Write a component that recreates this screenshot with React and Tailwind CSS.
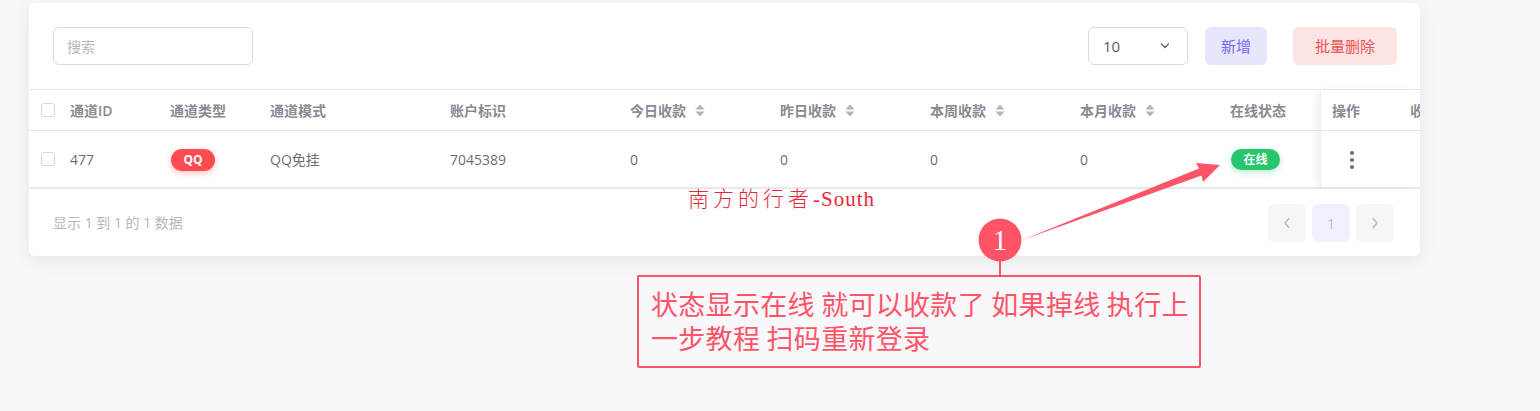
import React from "react";

const SortIcon = () => (
  <svg width="10" height="13" viewBox="0 0 10 13" className="ml-[9px] shrink-0">
    <path d="M5 0.5 L9.5 5.5 L0.5 5.5 Z" fill="#b4b3bb" />
    <path d="M5 12.5 L9.5 7.5 L0.5 7.5 Z" fill="#b4b3bb" />
  </svg>
);

const Checkbox = () => (
  <div className="w-[14px] h-[14px] rounded-[3px] border border-[#d8d6de] bg-white" />
);

const cols = [
  { w: "w-[100px]", label: "通道ID" },
  { w: "w-[100px]", label: "通道类型" },
  { w: "w-[180px]", label: "通道模式" },
  { w: "w-[180px]", label: "账户标识" },
  { w: "w-[150px]", label: "今日收款", sort: true },
  { w: "w-[150px]", label: "昨日收款", sort: true },
  { w: "w-[150px]", label: "本周收款", sort: true },
  { w: "w-[150px]", label: "本月收款", sort: true },
  { w: "w-[102px]", label: "在线状态" },
];

export default function App() {
  const font = { fontFamily: '"Open Sans", "Noto Sans CJK SC", sans-serif' };
  return (
    <div className="relative w-[1540px] h-[411px] bg-[#f8f7fa] pt-[3px] pl-[29px] overflow-hidden" style={font}>
      {/* Card */}
      <div className="w-[1391px] bg-white rounded-md shadow-[0_4px_18px_rgba(75,70,92,0.10)] overflow-hidden">
        {/* Toolbar */}
        <div className="flex items-center py-6 pl-6 pr-[23px]">
          <div className="w-[200px] h-[38px] rounded-md border border-[#dbdade] flex items-center pl-[13px] text-[14px] text-[#b7b5be]">
            搜索
          </div>
          <div className="flex-1" />
          <div className="w-[100px] h-[38px] rounded-md border border-[#dbdade] flex items-center justify-between pl-[14px] pr-[17px] text-[15px] text-[#5d596c]">
            <span>10</span>
            <svg width="10" height="6" viewBox="0 0 10 6">
              <path d="M1.5 1 L5 4.5 L8.5 1" stroke="#5d596c" strokeWidth="1.3" fill="none" strokeLinecap="round" strokeLinejoin="round" />
            </svg>
          </div>
          <div className="ml-[17px] w-[62px] h-[38px] rounded-md bg-[#e7e6fc] flex items-center justify-center text-[15px] text-[#7367f0]">
            新增
          </div>
          <div className="ml-[26px] w-[104px] h-[38px] rounded-md bg-[#fde3e4] flex items-center justify-center text-[15px] text-[#ea5455]">
            批量删除
          </div>
        </div>

        {/* Table */}
        <div className="flex border-t border-[#e6e5e8] border-b-2 border-b-[#e9e8ed]">
          <div className="flex-1 overflow-hidden">
            {/* Header row */}
            <div className="flex h-[41px] border-b border-[#e6e5e8] items-center">
              <div className="w-[29px] pl-[12px] shrink-0">
                <Checkbox />
              </div>
              {cols.map((c) => (
                <div key={c.label} className={`${c.w} shrink-0 pl-[12px] flex items-center text-[14px] font-semibold text-[#8a8993]`}>
                  <span>{c.label}</span>
                  {c.sort && <SortIcon />}
                </div>
              ))}
            </div>
            {/* Body row */}
            <div className="flex h-[56px] items-center text-[14px] text-[#6f6b7d]">
              <div className="w-[29px] pl-[12px] shrink-0">
                <Checkbox />
              </div>
              <div className="w-[100px] shrink-0 pl-[12px]">477</div>
              <div className="w-[100px] shrink-0 pl-[13px]">
                <span className="inline-flex items-center justify-center w-[44px] h-[22px] rounded-full bg-[#ff4c51] text-white text-[12px] font-bold shadow-[0_2px_6px_rgba(255,76,81,0.35)]">
                  QQ
                </span>
              </div>
              <div className="w-[180px] shrink-0 pl-[12px]">QQ免挂</div>
              <div className="w-[180px] shrink-0 pl-[12px]">7045389</div>
              <div className="w-[150px] shrink-0 pl-[12px]">0</div>
              <div className="w-[150px] shrink-0 pl-[12px]">0</div>
              <div className="w-[150px] shrink-0 pl-[12px]">0</div>
              <div className="w-[150px] shrink-0 pl-[12px]">0</div>
              <div className="w-[102px] shrink-0 pl-[13px]">
                <span className="inline-flex items-center justify-center w-[49px] h-[21px] rounded-full bg-[#28c76f] text-white text-[12px] font-bold shadow-[0_2px_6px_rgba(40,199,111,0.35)]">
                  在线
                </span>
              </div>
            </div>
          </div>
          {/* Fixed right columns */}
          <div className="w-[100px] shrink-0 bg-white shadow-[-5px_0_8px_-3px_rgba(75,70,92,0.10)] border-l border-[#efeef2] z-10 overflow-hidden">
            <div className="flex h-[41px] border-b border-[#e6e5e8] items-center text-[14px] font-semibold text-[#8a8993] whitespace-nowrap">
              <div className="w-[78px] shrink-0 pl-[11px]">操作</div>
              <div className="pl-[11px]">收</div>
            </div>
            <div className="flex h-[56px] items-center">
              <div className="w-[78px] shrink-0 pl-[29px] flex flex-col gap-[3px] pt-[1px]">
                <span className="w-[4px] h-[4px] rounded-full bg-[#6f6b7d]" />
                <span className="w-[4px] h-[4px] rounded-full bg-[#6f6b7d]" />
                <span className="w-[4px] h-[4px] rounded-full bg-[#6f6b7d]" />
              </div>
            </div>
          </div>
        </div>

        {/* Footer */}
        <div className="h-[67px] flex items-center justify-between pl-6 pr-[26px]">
          <span className="text-[14px] text-[#b7b5be]">显示 1 到 1 的 1 数据</span>
          <div className="flex gap-[6px] pt-[1px]">
            <div className="w-[38px] h-[38px] rounded-md bg-[#f6f6f7] flex items-center justify-center">
              <svg width="8" height="12" viewBox="0 0 8 12">
                <path d="M6 1.5 L2 6 L6 10.5" stroke="#b7b5be" strokeWidth="1.4" fill="none" strokeLinecap="round" strokeLinejoin="round" />
              </svg>
            </div>
            <div className="w-[38px] h-[38px] rounded-md bg-[#f1f0fe] flex items-center justify-center text-[14px] text-[#b9b3f7]">
              1
            </div>
            <div className="w-[38px] h-[38px] rounded-md bg-[#f6f6f7] flex items-center justify-center">
              <svg width="8" height="12" viewBox="0 0 8 12">
                <path d="M2 1.5 L6 6 L2 10.5" stroke="#b7b5be" strokeWidth="1.4" fill="none" strokeLinecap="round" strokeLinejoin="round" />
              </svg>
            </div>
          </div>
        </div>
      </div>

      {/* Watermark text */}
      <div className="absolute left-[688px] top-[185px] leading-[25px] text-[#e8283a] whitespace-nowrap flex items-baseline">
        <span
          className="text-[21px] tracking-[4px]"
          style={{ fontFamily: '"Noto Sans CJK SC", serif', fontWeight: 300 }}
        >
          南方的行者
        </span>
        <span className="text-[21px] tracking-[1px]" style={{ fontFamily: '"Liberation Serif", serif' }}>
          -South
        </span>
      </div>

      {/* Arrow + marker */}
      <svg className="absolute left-0 top-0 pointer-events-none" width="1540" height="411" viewBox="0 0 1540 411">
        <path d="M1021 240.5 L1199 168.5 L1196 163 L1220 165 L1203 182 L1201.5 175.5 Z" fill="#ff5468" />
        <line x1="1000" y1="260" x2="1000" y2="276" stroke="#ff5468" strokeWidth="2" />
        <circle cx="1000" cy="240" r="21.5" fill="#ff5468" />
        <text x="1000" y="250" textAnchor="middle" fill="#ffffff" fontSize="29" fontFamily="Liberation Serif, serif">1</text>
      </svg>

      {/* Callout box */}
      <div
        className="absolute left-[637px] top-[275px] w-[564px] h-[93px] border-2 border-[#ff5468] rounded-[2px] pl-[12px] pt-[10px] text-[27px] tracking-[0.3px] leading-[34px] text-[#ff5468] whitespace-nowrap"
        style={{ fontFamily: '"Noto Sans CJK SC", sans-serif' }}
      >
        <div>状态显示在线 就可以收款了 如果掉线 执行上</div>
        <div>一步教程 扫码重新登录</div>
      </div>
    </div>
  );
}
